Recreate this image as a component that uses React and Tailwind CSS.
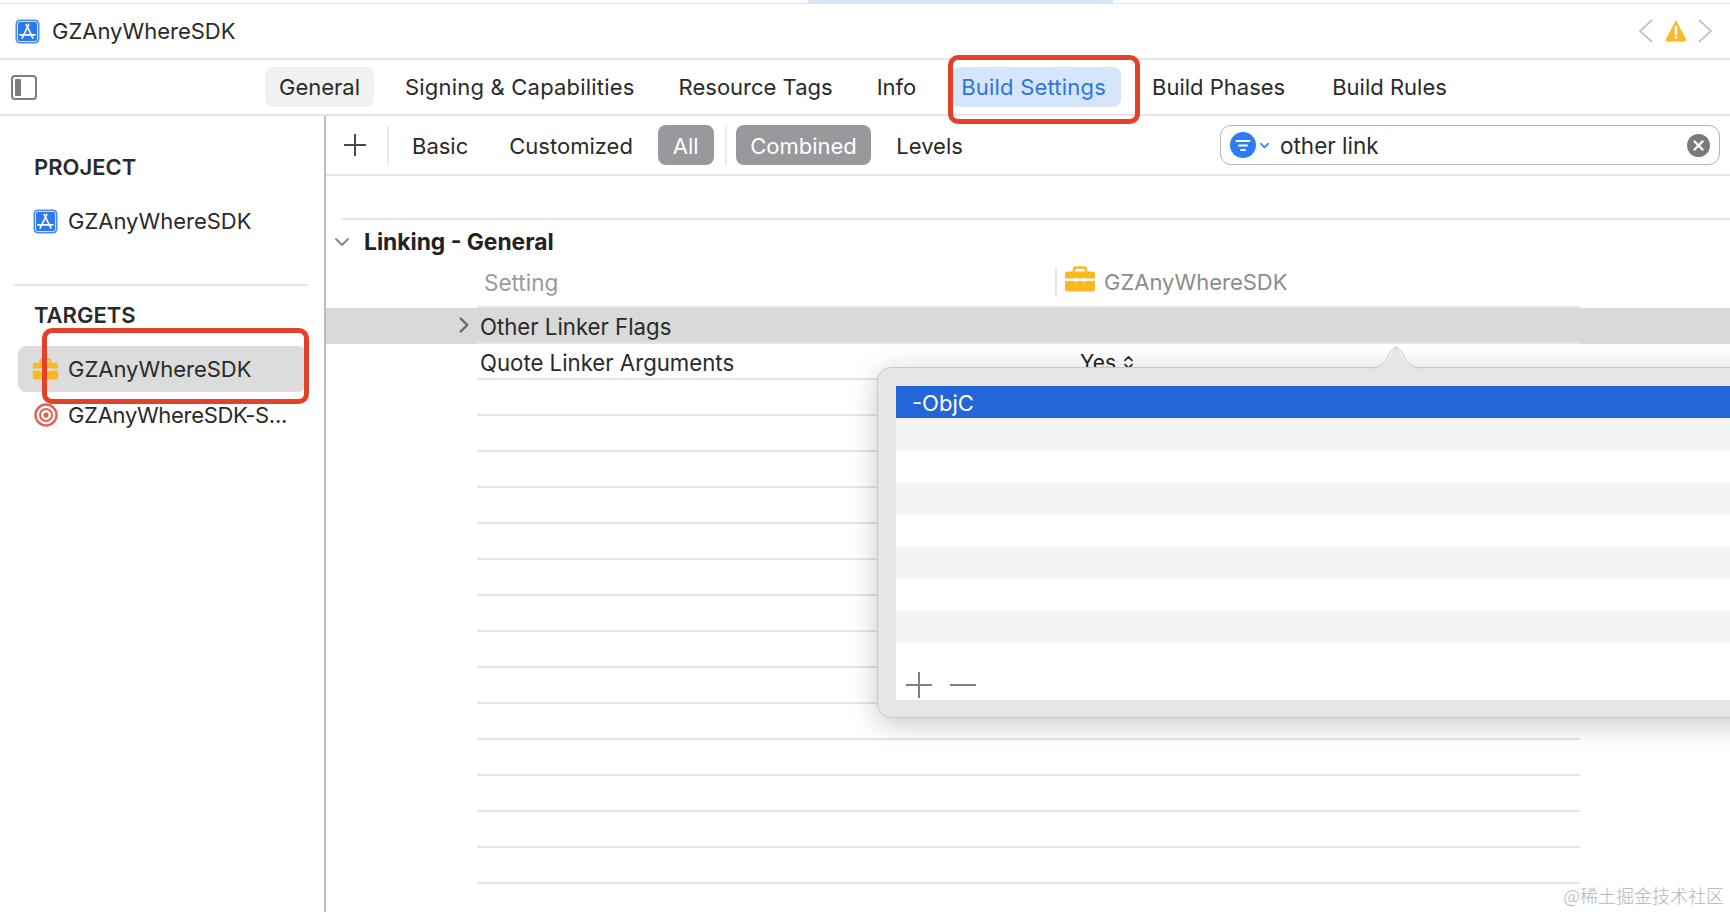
import { ChevronDown, ChevronRight, ChevronsUpDown } from 'lucide-react';

const font = "font-['Inter','Liberation_Sans',sans-serif]";

function AppIcon() {
  return (
    <svg width="25" height="25" viewBox="0 0 25 25" className="shrink-0">
      <rect x="0.5" y="0.5" width="24" height="24" rx="4.5" fill="#4a8df0" />
      <rect x="2.5" y="2.5" width="20" height="20" rx="2.5" fill="#2f78e8" stroke="#cfe0fa" strokeWidth="1" />
      <path d="M11.2 5.5 L17.8 19 M13.8 5.5 L7.2 19 M5 15.8 H20" stroke="#fff" strokeWidth="1.7" strokeLinecap="round" fill="none" />
    </svg>
  );
}

function ToolboxIcon({ w = 32, h = 26 }) {
  return (
    <svg width={w} height={h} viewBox="0 0 32 26" className="shrink-0">
      <path d="M10 6 V3.5 A2 2 0 0 1 12 1.5 H20 A2 2 0 0 1 22 3.5 V6" fill="none" stroke="#fbb81f" strokeWidth="2.6" />
      <path d="M4 5.5 H28 A3 3 0 0 1 31 8.5 V12.5 H22 A2.5 2.5 0 0 0 18.5 12.5 H13.5 A2.5 2.5 0 0 0 10 12.5 H1 V8.5 A3 3 0 0 1 4 5.5 Z" fill="#fbb81f" />
      <path d="M1 15 H10 A2.5 2.5 0 0 0 13.5 15 H18.5 A2.5 2.5 0 0 0 22 15 H31 V23 A2.5 2.5 0 0 1 28.5 25.5 H3.5 A2.5 2.5 0 0 1 1 23 Z" fill="#fbb81f" />
    </svg>
  );
}

function TargetIcon() {
  return (
    <svg width="24" height="24" viewBox="0 0 24 24" className="shrink-0">
      <circle cx="12" cy="12" r="10.5" fill="none" stroke="#e2604e" strokeWidth="2.4" />
      <circle cx="12" cy="12" r="6" fill="none" stroke="#e2604e" strokeWidth="2" />
      <circle cx="12" cy="12" r="2.6" fill="#e2604e" />
    </svg>
  );
}

function Tab({ label, active, current, className }) {
  return (
    <div
      className={`flex h-10 items-center rounded-lg px-[14px] ${active ? 'bg-[#f1f1f1]' : ''} ${current ? 'bg-[#d5e6fb] text-[#2f74e6]' : 'text-[#2a2a2a]'} ${className}`}
    >
      {label}
    </div>
  );
}

function Filter({ label, on, className }) {
  return (
    <div
      className={`flex h-10 items-center rounded-lg px-[14px] pt-0.5 ${on ? 'bg-[#98989d] text-white' : 'text-[#2a2a2a]'} ${className}`}
    >
      {label}
    </div>
  );
}

function SideRow({ icon, label, selected, labelClass = '' }) {
  return (
    <div className={`mx-[18px] flex h-[46px] items-center gap-[10px] rounded-lg pl-[15px] ${selected ? 'bg-[#dcdcdc]' : ''}`}>
      <div className="flex w-[25px] justify-center">{icon}</div>
      <span className={`text-[22px] text-[#2a2a2a] ${labelClass}`}>{label}</span>
    </div>
  );
}

function TableRow({ children, selected }) {
  return (
    <div className={`h-9 pl-[151px] ${selected ? 'bg-[#d9d9d9]' : ''}`}>
      <div className="flex h-full w-[1103px] items-center border-b-2 border-[#e5e5e5] pl-[3px] pt-[3px] text-[22.2px] text-[#2a2a2a]">
        {children}
      </div>
    </div>
  );
}

function PlusMinus({ plus }) {
  return (
    <svg width="28" height="28" viewBox="0 0 28 28" className="shrink-0">
      <path d="M1 14 H27" stroke="#7f7f7f" strokeWidth="2" />
      {plus && <path d="M14 1 V27" stroke="#7f7f7f" strokeWidth="2" />}
    </svg>
  );
}

export default function App() {
  const stripes = [false, true, false, true, false, true, false];
  const emptyRows = Array.from({ length: 15 });

  return (
    <div className={`relative flex h-[912px] w-[1730px] flex-col overflow-hidden bg-white ${font}`}>
      {/* window top edge */}
      <div className="h-1 shrink-0 border-b border-[#e5e5e5]">
        <div className="ml-[808px] h-[3px] w-[305px] bg-[#d6e6f8]" />
      </div>

      {/* title bar */}
      <div className="flex h-14 shrink-0 items-center border-b-2 border-[#e5e5e5] pl-[15px] pr-[18px]">
        <AppIcon />
        <span className="ml-3 text-[22px] text-[#2a2a2a]">GZAnyWhereSDK</span>
        <div className="ml-auto flex items-center">
          <svg width="14" height="24" viewBox="0 0 14 24">
            <path d="M13 1 L1 12 L13 23" fill="none" stroke="#c2c2c2" strokeWidth="1.8" />
          </svg>
          <svg width="22" height="22" viewBox="0 0 22 22" className="ml-[12px] mr-[11px]">
            <path d="M11 1 L21 20 Q21.5 21 20 21 H2 Q0.5 21 1 20 Z" fill="#fbb81f" stroke="#fbb81f" strokeLinejoin="round" />
            <path d="M11 7 V14" stroke="#fff" strokeWidth="2.6" strokeLinecap="round" />
            <circle cx="11" cy="17.5" r="1.5" fill="#fff" />
          </svg>
          <svg width="14" height="24" viewBox="0 0 14 24">
            <path d="M1 1 L13 12 L1 23" fill="none" stroke="#c2c2c2" strokeWidth="1.8" />
          </svg>
        </div>
      </div>

      {/* tab bar */}
      <div className="flex h-14 shrink-0 items-center border-b-2 border-[#e5e5e5] pl-[11px] text-[22px]">
        <div className="flex h-[25px] w-[26px] items-center rounded-[4px] border-2 border-[#7d7d7d] p-[2px]">
          <div className="h-full w-[6px] rounded-[1px] bg-[#7d7d7d]" />
        </div>
        <Tab label="General" active className="ml-[228px]" />
        <Tab label="Signing & Capabilities" className="ml-[17px] tracking-[0.2px]" />
        <Tab label="Resource Tags" className="ml-[16px]" />
        <Tab label="Info" className="ml-[16px]" />
        <Tab label="Build Settings" current className="ml-[21px] !pl-[10px] !pr-[15px] tracking-[0.2px]" />
        <Tab label="Build Phases" className="ml-[17px]" />
        <Tab label="Build Rules" className="ml-[19px]" />
      </div>

      <div className="flex min-h-0 flex-1">
        {/* sidebar */}
        <div className="w-[326px] shrink-0 border-r-2 border-[#bcbcbc]">
          <div className="pl-[34px] pt-[39px] text-[22px] leading-[24px] font-semibold text-[#2a2a2a]">PROJECT</div>
          <div className="mt-[19px]">
            <SideRow icon={<AppIcon />} label="GZAnyWhereSDK" />
          </div>
          <div className="mx-[14px] mt-[40px] h-0.5 w-[294px] bg-[#e5e5e5]" />
          <div className="pl-[34px] pt-[17px] text-[22px] leading-[24px] font-semibold text-[#2a2a2a]">TARGETS</div>
          <div className="mt-[19px]">
            <SideRow icon={<ToolboxIcon w={27} h={22} />} label="GZAnyWhereSDK" selected />
            <SideRow icon={<TargetIcon />} label="GZAnyWhereSDK-S..." labelClass="tracking-[-0.3px]" />
          </div>
        </div>

        {/* build settings */}
        <div className="min-w-0 flex-1">
          <div className="flex h-[60px] items-center border-b-2 border-[#e5e5e5] text-[22px]">
            <svg width="22" height="22" viewBox="0 0 22 22" className="ml-[18px] shrink-0">
              <path d="M0 11 H22 M11 0 V22" stroke="#4a4a4a" strokeWidth="2" />
            </svg>
            <div className="ml-[21px] h-[38px] w-0.5 bg-[#e9e9e9]" />
            <Filter label="Basic" className="ml-[9px]" />
            <Filter label="Customized" className="ml-[13px]" />
            <Filter label="All" on className="ml-[11px] !px-[15px]" />
            <div className="ml-[11px] h-[38px] w-0.5 bg-[#e9e9e9]" />
            <Filter label="Combined" on className="ml-[9px] !px-[14.5px]" />
            <Filter label="Levels" className="ml-[11px]" />
            <div className="ml-auto mr-[10px] flex h-10 w-[500px] items-center rounded-[11px] border border-[#b3b3b3] pl-[9px] pr-[9px]">
              <svg width="26" height="26" viewBox="0 0 26 26" className="shrink-0">
                <circle cx="13" cy="13" r="13" fill="#2f7bf2" />
                <path d="M6.5 9 H19.5 M9 13.5 H17 M11 18 H15" stroke="#fff" strokeWidth="2" strokeLinecap="round" />
              </svg>
              <ChevronDown size={15} strokeWidth={2.4} className="ml-[1px] text-[#2f7bf2]" />
              <span className="ml-2 pt-0.5 text-[22.5px] text-[#2a2a2a]">other link</span>
              <div className="ml-auto flex h-[23px] w-[23px] items-center justify-center rounded-full bg-[#7a7a7a]">
                <svg width="11" height="11" viewBox="0 0 11 11">
                  <path d="M1.5 1.5 L9.5 9.5 M9.5 1.5 L1.5 9.5" stroke="#fff" strokeWidth="2.4" strokeLinecap="round" />
                </svg>
              </div>
            </div>
          </div>

          <div className="ml-[16px] mt-[42px] h-0.5 bg-[#e5e5e5]" />

          <div className="flex h-11 items-center pl-[4px]">
            <ChevronDown size={24} strokeWidth={2} className="text-[#8a8a8a]" />
            <span className="ml-[10px] pt-px text-[22.8px] font-bold text-[#222]">Linking - General</span>
          </div>

          <div className="flex h-11 pl-[151px]">
            <div className="flex w-[1103px] border-b-2 border-[#e5e5e5]">
              <div className="w-[578px] pl-[7px] pt-[5px] text-[22.5px] leading-[27px] text-[#9a9a9a]">Setting</div>
              <div className="mt-[4px] h-[28px] w-0.5 bg-[#e5e5e5]" />
              <div className="ml-[7px] flex h-[36px] items-start pt-[2px]">
                <ToolboxIcon />
                <span className="ml-[8px] mt-[3px] text-[22px] leading-[27px] text-[#8c8c8c]">GZAnyWhereSDK</span>
              </div>
            </div>
          </div>

          <TableRow selected>
            <div className="relative w-full">
              <ChevronRight size={26} strokeWidth={2.2} className="absolute left-[-29px] top-[2px] text-[#666]" />
              Other Linker Flags
            </div>
          </TableRow>
          <TableRow>
            <span className="w-[600px]">Quote Linker Arguments</span>
            <span className="flex items-center text-[21px] text-[#222]">
              Yes
              <ChevronsUpDown size={17} strokeWidth={2.2} className="ml-[4px]" />
            </span>
          </TableRow>
          {emptyRows.map((_, i) => (
            <TableRow key={i} />
          ))}
        </div>
      </div>

      {/* flags popover */}
      <div className="absolute left-[877px] top-[367px] h-[351px] w-[900px] rounded-[14px] border border-[#c9c9c9] bg-[#e6e6e6] pl-[18px] pt-[18px] shadow-[0_6px_28px_rgba(0,0,0,0.22)]">
        <svg width="58" height="26" viewBox="0 0 58 26" className="absolute left-[489px] top-[-25px]">
          <path d="M0 25 C14 25 16 22 22 14 L29 2 L36 14 C42 22 44 25 58 25 V26 H0 Z" fill="#e6e6e6" />
          <path d="M0 25 C14 25 16 22 22 11 Q29 -2 36 11 C42 22 44 25 58 25" fill="none" stroke="#c9c9c9" />
        </svg>
        <div className="flex h-8 items-center bg-[#2366d9] pl-[16px] pt-0.5 text-[22px] text-white">-ObjC</div>
        {stripes.map((gray, i) => (
          <div key={i} className={`h-8 ${gray ? 'bg-white' : 'bg-[#f3f5f5]'}`} />
        ))}
        <div className="flex h-[58px] items-start gap-[16px] bg-white pl-[9px] pt-[29px]">
          <PlusMinus plus />
          <PlusMinus />
        </div>
      </div>

      {/* red annotations on the screenshot */}
      <div className="absolute left-[948px] top-[55px] h-[69px] w-[192px] rounded-[10px] border-[5px] border-[#e5412a]" />
      <div className="absolute left-[42px] top-[328px] h-[76px] w-[267px] rounded-[10px] border-[5px] border-[#e5412a]" />

      {/* watermark */}
      <div className="absolute bottom-[3px] right-[6px] font-['Noto_Sans_CJK_SC','Liberation_Sans',sans-serif] text-[18px] font-light text-[#b4b4b4]">
        @稀土掘金技术社区
      </div>
    </div>
  );
}
